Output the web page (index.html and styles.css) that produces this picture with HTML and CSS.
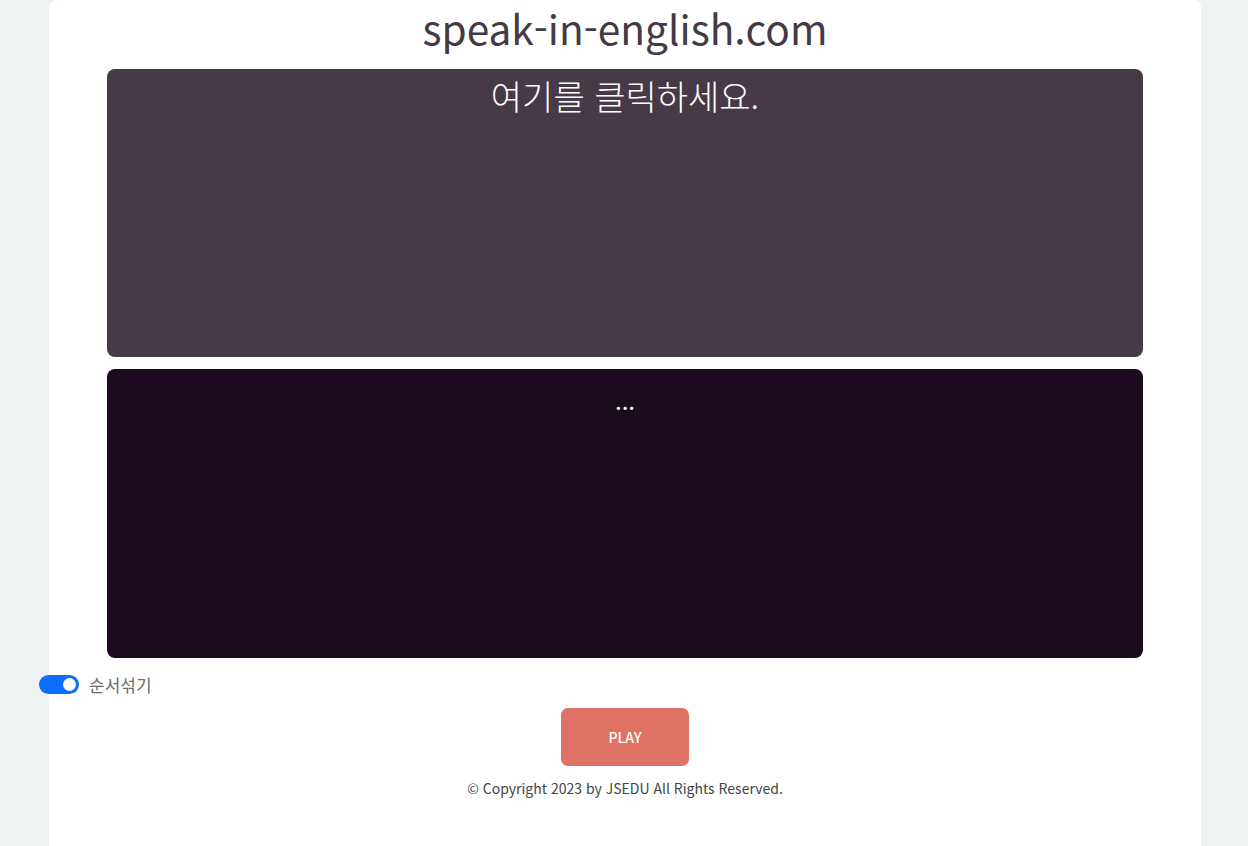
FILE: index.html
```html
<!DOCTYPE html>
<html lang="ko">
<head>
<meta charset="utf-8">
<title>speak-in-english.com</title>
<link rel="stylesheet" href="styles.css">
</head>
<body>
<div class="page">
  <h1 class="title">speak-in-english.com</h1>
  <div class="cards">
    <div class="card card-question">여기를 클릭하세요.</div>
    <div class="card card-answer">...</div>
  </div>
  <div class="options">
    <label class="switch">
      <span class="switch-track"><span class="switch-knob"></span></span>
      <span class="switch-label">순서섞기</span>
    </label>
  </div>
  <div class="actions">
    <button class="play-btn">PLAY</button>
  </div>
  <p class="copyright">© Copyright 2023 by JSEDU All Rights Reserved.</p>
</div>
</body>
</html>
```

FILE: styles.css
```css
html, body {
  margin: 0;
  padding: 0;
}
body {
  background: #eef2f3;
  font-family: "Noto Sans CJK KR", "Noto Sans", sans-serif;
  color: #433a45;
  padding-left: 2px;
  overflow: hidden;
}
.page {
  width: 1152px;
  margin: 0 auto;
  background: #ffffff;
  border-radius: 8px;
  min-height: 880px;
  box-sizing: border-box;
}
.title {
  margin: 0;
  padding-top: 0;
  text-align: center;
  font-weight: 400;
  font-size: 40.6px;
  line-height: 56px;
  color: #433a45;
}
.cards {
  display: flex;
  flex-direction: column;
  gap: 12px;
  margin: 13px 58px 0;
}
.card {
  height: 288px;
  border-radius: 8px;
  color: #ffffff;
  text-align: center;
}
.card-question {
  background: #463a47;
  font-size: 34px;
  font-weight: 300;
  line-height: 54px;
}
.card-answer {
  height: 289px;
  background: #1c0a1e;
  font-size: 24px;
  line-height: 62px;
}
.options {
  margin-top: 14px;
  margin-left: -10px;
  display: flex;
}
.switch {
  display: flex;
  align-items: center;
  gap: 10px;
}
.switch-track {
  width: 40px;
  height: 19px;
  border-radius: 10px;
  background: #0d6efd;
  display: flex;
  align-items: center;
  justify-content: flex-end;
  padding: 0 3px;
  box-sizing: border-box;
}
.switch-knob {
  width: 13px;
  height: 13px;
  border-radius: 50%;
  background: #ffffff;
}
.switch-label {
  font-size: 17px;
  color: #6b6b6b;
}
.actions {
  display: flex;
  justify-content: center;
  margin-top: 11px;
}
.play-btn {
  width: 128px;
  height: 58px;
  border: none;
  border-radius: 7px;
  background: #df7165;
  color: #ffffff;
  font-family: "Noto Sans CJK KR", "Noto Sans", sans-serif;
  font-size: 14px;
  font-weight: 500;
}
.copyright {
  margin: 11px 0 0;
  text-align: center;
  font-size: 14px;
  line-height: 22px;
  color: #444444;
}
```
